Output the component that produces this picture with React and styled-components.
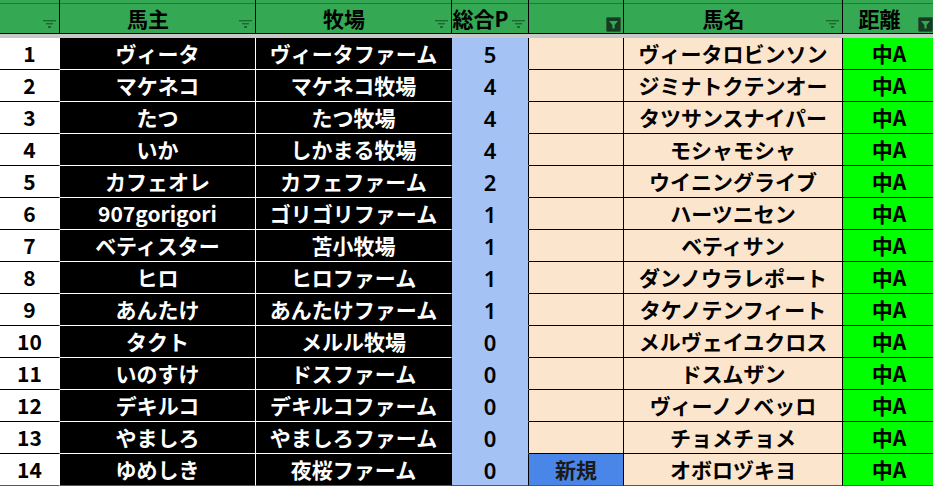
import React from 'react'
import styled, { createGlobalStyle } from 'styled-components'

const GlobalStyle = createGlobalStyle`
  html, body {
    margin: 0;
    padding: 0;
    background: #ffffff;
    overflow: hidden;
  }
  body {
    font-family: "Noto Sans CJK JP", "Noto Sans", sans-serif;
  }
`

const HEAD_GREEN = '#34a853'
const LINE_GREEN = '#1e7b3a'

const rows = [
  { owner: 'ヴィータ', farm: 'ヴィータファーム', pts: 5, horse: 'ヴィータロビンソン' },
  { owner: 'マケネコ', farm: 'マケネコ牧場', pts: 4, horse: 'ジミナトクテンオー' },
  { owner: 'たつ', farm: 'たつ牧場', pts: 4, horse: 'タツサンスナイパー' },
  { owner: 'いか', farm: 'しかまる牧場', pts: 4, horse: 'モシャモシャ' },
  { owner: 'カフェオレ', farm: 'カフェファーム', pts: 2, horse: 'ウイニングライブ' },
  { owner: '907gorigori', farm: 'ゴリゴリファーム', pts: 1, horse: 'ハーツニセン' },
  { owner: 'ベティスター', farm: '苫小牧場', pts: 1, horse: 'ベティサン' },
  { owner: 'ヒロ', farm: 'ヒロファーム', pts: 1, horse: 'ダンノウラレポート' },
  { owner: 'あんたけ', farm: 'あんたけファーム', pts: 1, horse: 'タケノテンフィート' },
  { owner: 'タクト', farm: 'メルル牧場', pts: 0, horse: 'メルヴェイユクロス' },
  { owner: 'いのすけ', farm: 'ドスファーム', pts: 0, horse: 'ドスムザン' },
  { owner: 'デキルコ', farm: 'デキルコファーム', pts: 0, horse: 'ヴィーノノベッロ' },
  { owner: 'やましろ', farm: 'やましろファーム', pts: 0, horse: 'チョメチョメ' },
  { owner: 'ゆめしき', farm: '夜桜ファーム', pts: 0, note: '新規', horse: 'オボロヅキヨ' },
]

const headers = [
  { label: '', filter: 'off' },
  { label: '馬主', filter: 'off' },
  { label: '牧場', filter: 'off' },
  { label: '総合P', filter: 'off' },
  { label: '', filter: 'on' },
  { label: '馬名', filter: 'off' },
  { label: '距離', filter: 'on' },
]

const Sheet = styled.div`
  width: 936px;
  display: grid;
  grid-template-columns: 60px 196px 196px 77px 95px 219px 93px;
`

const HeadCell = styled.div`
  box-sizing: border-box;
  height: 34px;
  display: flex;
  align-items: stretch;
  background: linear-gradient(
    to bottom,
    ${HEAD_GREEN} 0 3px,
    ${LINE_GREEN} 3px 4px,
    ${HEAD_GREEN} 4px
  );
  border-bottom: 1px solid #000;
  border-right: 1px solid ${p => (p.$last ? HEAD_GREEN : '#000')};
`

const HeadLabel = styled.span`
  flex: 1;
  min-width: 0;
  display: flex;
  align-items: center;
  justify-content: center;
  padding-top: 4px;
  font-size: 21px;
  font-weight: 700;
  color: #000;
  white-space: nowrap;
  line-height: 1;
`

const FilterSlot = styled.span`
  width: ${p => (p.$on ? 17 : 16)}px;
  flex: none;
  display: flex;
  align-items: flex-end;
  justify-content: flex-end;
  padding: 0 ${p => (p.$on ? 2 : 3)}px ${p => (p.$on ? 1 : 5)}px 0;
`

const Divider = styled.div`
  grid-column: 1 / -1;
  height: 4px;
  background: #c8c8c8;
`

const Cell = styled.div`
  box-sizing: border-box;
  height: 32px;
  display: flex;
  align-items: center;
  justify-content: center;
  background: ${p => p.$bg};
  color: ${p => p.$fg || '#000'};
  border-right: 1px solid ${p => p.$vline || p.$bg};
  border-bottom: 1px solid ${p => (p.$endRow ? LINE_GREEN : p.$hline || p.$bg)};
  font-size: 21px;
  font-weight: 700;
  line-height: 1;
  white-space: nowrap;
  overflow: hidden;
`

const PointCell = styled(Cell)`
  font-family: "Noto Sans", "Noto Sans CJK JP", sans-serif;
  font-size: 22px;
  font-weight: 600;
`

const IdleFilter = () => (
  <svg width="13" height="8" viewBox="0 0 13 8">
    <rect x="0" y="0" width="13" height="1.4" fill="#1c6a31" />
    <rect x="3" y="3" width="7" height="1.4" fill="#1c6a31" />
    <rect x="5" y="6" width="3" height="2" fill="#1c6a31" />
  </svg>
)

const ActiveFilter = () => (
  <svg width="15" height="15" viewBox="0 0 15 15">
    <rect x="0.5" y="0.5" width="14" height="14" rx="1" fill="#173a22" stroke="#2a5a36" />
    <path d="M3 4 H12 L8.6 8 V11.5 H6.4 V8 Z" fill={HEAD_GREEN} />
  </svg>
)

const App = () => (
  <>
    <GlobalStyle />
    <Sheet>
      {headers.map((h, i) => (
        <HeadCell key={i} $last={i === headers.length - 1}>
          <HeadLabel>{h.label}</HeadLabel>
          <FilterSlot $on={h.filter === 'on'}>
            {h.filter === 'on' ? <ActiveFilter /> : <IdleFilter />}
          </FilterSlot>
        </HeadCell>
      ))}
      <Divider />
      {rows.map((r, i) => {
        const end = i === rows.length - 1
        return (
          <React.Fragment key={i}>
            <Cell $bg="#ffffff" $hline="#000" $endRow={end}>{i + 1}</Cell>
            <Cell $bg="#000" $fg="#fff" $hline="#fff" $vline="#fff" $endRow={end}>{r.owner}</Cell>
            <Cell $bg="#000" $fg="#fff" $hline="#fff" $endRow={end}>{r.farm}</Cell>
            <PointCell $bg="#a4c2f4" $vline="#000" $endRow={end}>{r.pts}</PointCell>
            <Cell
              $bg={r.note ? '#4a86e8' : '#fce5cd'}
              $fg="#1a1a1a"
              $hline="#000"
              $vline="#000"
              $endRow={end}
            >
              {r.note}
            </Cell>
            <Cell $bg="#fce5cd" $hline="#000" $vline="#000" $endRow={end}>{r.horse}</Cell>
            <Cell $bg="#00ff00" $hline="#000" $endRow={end}>中A</Cell>
          </React.Fragment>
        )
      })}
    </Sheet>
  </>
)

export default App
